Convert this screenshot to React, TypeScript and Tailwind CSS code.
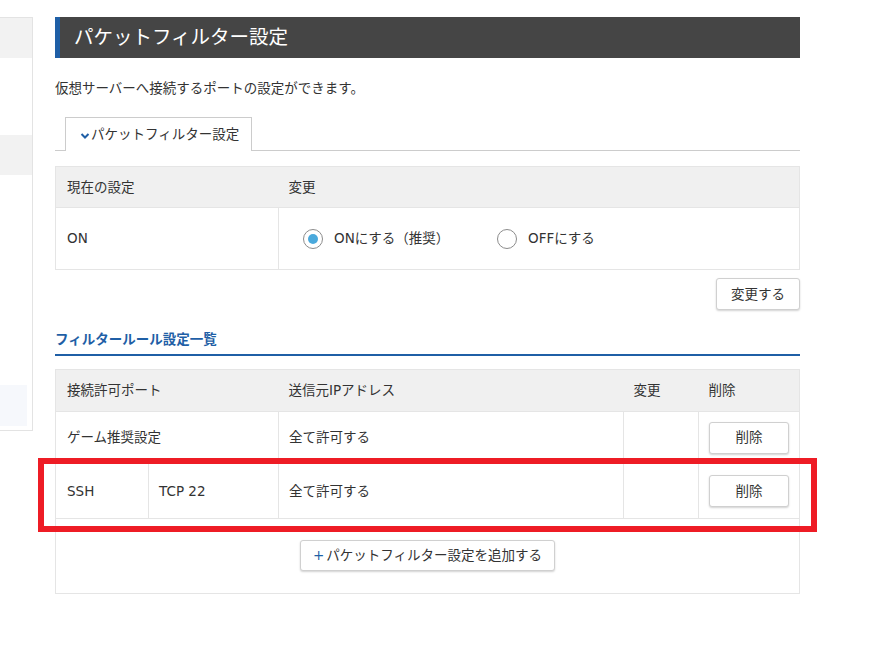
import React from "react";

const font = { fontFamily: '"DejaVu Sans", "Noto Sans CJK JP", sans-serif' };

function Btn({ children, className = "" }: { children: React.ReactNode; className?: string }) {
  return (
    <button
      className={`flex items-center justify-center rounded-[3px] border border-[#d0d0d0] bg-white text-[13.5px] text-[#333] shadow-[0_1px_2px_rgba(0,0,0,0.18)] ${className}`}
    >
      {children}
    </button>
  );
}

function Radio({ checked }: { checked?: boolean }) {
  return (
    <span className="flex h-[20px] w-[20px] shrink-0 items-center justify-center rounded-full border-[1.5px] border-[#8c8c8c] bg-white">
      {checked && <span className="h-[10px] w-[10px] rounded-full bg-[#4aa9dc]" />}
    </span>
  );
}

export default function App() {
  return (
    <div style={font} className="relative flex h-[645px] w-[869px] overflow-hidden bg-white text-[13.5px] text-[#333]">
      {/* sidebar */}
      <div className="mt-[17px] flex h-[414px] w-[33px] shrink-0 flex-col border-y border-r border-[#e3e3e3]">
        <div className="h-[40px] bg-[#f2f2f2]" />
        <div className="h-[77px]" />
        <div className="h-[40px] bg-[#f2f2f2]" />
        <div className="flex-1" />
        <div className="mb-[4px] mr-[5px] h-[41px] bg-[#f6f8fc]" />
      </div>

      {/* main */}
      <div className="ml-[22px] flex w-[745px] shrink-0 flex-col pt-[17px]">
        <div className="flex h-[41px] items-center border-l-[5px] border-[#1f5fa6] bg-[#454545] pl-[14px] text-[19.5px] text-white">
          パケットフィルター設定
        </div>

        <p className="mt-[20px] h-[20px] leading-[20px]">仮想サーバーへ接続するポートの設定ができます。</p>

        <div className="mt-[19px] flex border-b border-[#cccccc] pl-[10px]">
          <div className="-mb-px flex h-[34px] w-[187px] items-center border border-b-0 border-[#cccccc] bg-white pl-[14px]">
            <svg width="10" height="8" viewBox="0 0 10 8" className="mr-[1px] mt-[3px]">
              <polyline points="1.5,2 5,5.5 8.5,2" fill="none" stroke="#1f5fa6" strokeWidth="2" />
            </svg>
            <span>パケットフィルター設定</span>
          </div>
        </div>

        <table className="mt-[15px] w-full table-fixed border-collapse border border-[#e5e5e5]">
          <colgroup>
            <col className="w-[223px]" />
            <col />
          </colgroup>
          <thead>
            <tr className="h-[41px] bg-[#f0f0f0]">
              <th className="border-y border-[#e5e5e5] pl-[11px] text-left font-normal">現在の設定</th>
              <th className="border-y border-[#e5e5e5] pl-[10px] text-left font-normal">変更</th>
            </tr>
          </thead>
          <tbody>
            <tr className="h-[62px]">
              <td className="border border-[#e5e5e5] pl-[11px]">ON</td>
              <td className="border border-[#e5e5e5] pl-[24px]">
                <div className="flex items-center">
                  <label className="flex w-[194px] items-center gap-[11px]">
                    <Radio checked />
                    <span>ONにする（推奨）</span>
                  </label>
                  <label className="flex items-center gap-[11px]">
                    <Radio />
                    <span>OFFにする</span>
                  </label>
                </div>
              </td>
            </tr>
          </tbody>
        </table>

        <div className="mt-[8px] flex justify-end">
          <Btn className="h-[32px] w-[84px]">変更する</Btn>
        </div>

        <div className="mt-[20px] border-b-2 border-[#1f5fa6] pb-[6px] text-[13.5px] font-bold leading-[18px] text-[#1f5fa6]">
          フィルタールール設定一覧
        </div>

        <div className="mt-[13px] flex flex-col border border-[#e5e5e5]">
          <table className="-m-px w-[calc(100%+2px)] table-fixed border-collapse">
            <colgroup>
              <col className="w-[93px]" />
              <col className="w-[130px]" />
              <col className="w-[345px]" />
              <col className="w-[75px]" />
              <col />
            </colgroup>
            <thead>
              <tr className="h-[42px] bg-[#f0f0f0]">
                <th colSpan={2} className="border-y border-l border-[#e5e5e5] pl-[11px] text-left font-normal">
                  接続許可ポート
                </th>
                <th className="border-y border-[#e5e5e5] pl-[10px] text-left font-normal">送信元IPアドレス</th>
                <th className="border-y border-[#e5e5e5] pl-[10px] text-left font-normal">変更</th>
                <th className="border-y border-r border-[#e5e5e5] pl-[10px] text-left font-normal">削除</th>
              </tr>
            </thead>
            <tbody>
              <tr className="h-[52px]">
                <td colSpan={2} className="border border-[#e5e5e5] pl-[11px]">ゲーム推奨設定</td>
                <td className="border border-[#e5e5e5] pl-[10px]">全て許可する</td>
                <td className="border border-[#e5e5e5]" />
                <td className="border border-[#e5e5e5]">
                  <div className="flex justify-center">
                    <Btn className="h-[32px] w-[80px]">削除</Btn>
                  </div>
                </td>
              </tr>
              <tr className="h-[55px]">
                <td className="border border-[#e5e5e5] pl-[11px]">SSH</td>
                <td className="border border-[#e5e5e5] pl-[10px]">TCP 22</td>
                <td className="border border-[#e5e5e5] pl-[10px]">全て許可する</td>
                <td className="border border-[#e5e5e5]" />
                <td className="border border-[#e5e5e5]">
                  <div className="flex justify-center">
                    <Btn className="h-[32px] w-[80px]">削除</Btn>
                  </div>
                </td>
              </tr>
            </tbody>
          </table>
          <div className="flex justify-center py-[22px]">
            <Btn className="h-[31px] w-[255px]">
              <span className="mr-[2px] text-[#1f5fa6]">+</span>
              パケットフィルター設定を追加する
            </Btn>
          </div>
        </div>
      </div>

      {/* annotation */}
      <div className="pointer-events-none absolute left-[38px] top-[458px] h-[74px] w-[779px] border-[6px] border-[#ee1c25]" />
    </div>
  );
}
